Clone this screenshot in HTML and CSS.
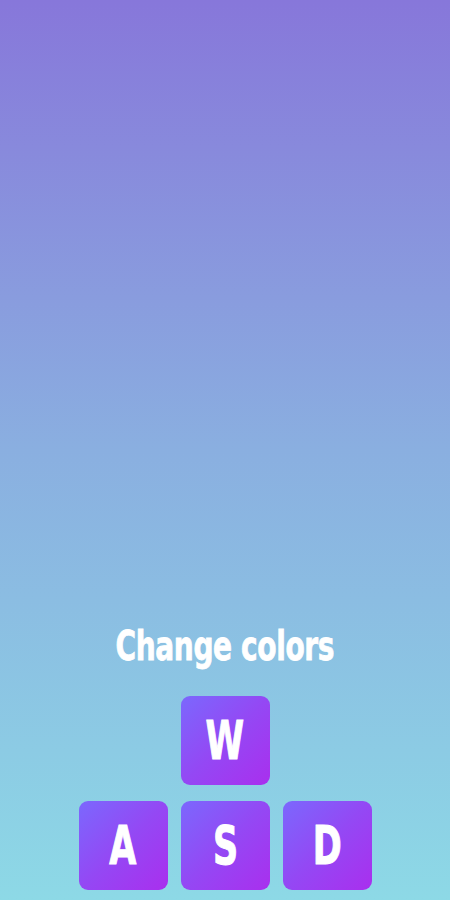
FILE: index.html
```html
<!DOCTYPE html>
<html lang="en">
<head>
<meta charset="utf-8">
<title>Change colors</title>
<link rel="stylesheet" href="styles.css">
</head>
<body>
<main class="screen">
  <h1 class="title"><span class="squeeze">Change colors</span></h1>
  <div class="keys">
    <div class="key key-w"><span class="squeeze">W</span></div>
    <div class="key key-a"><span class="squeeze">A</span></div>
    <div class="key key-s"><span class="squeeze">S</span></div>
    <div class="key key-d"><span class="squeeze">D</span></div>
  </div>
</main>
</body>
</html>
```

FILE: styles.css
```css
html, body {
  margin: 0;
  padding: 0;
  height: 100%;
}
body {
  background: linear-gradient(to bottom, #8777da 0%, #8aafe0 50%, #8dd9e6 100%);
  font-family: "DejaVu Sans Condensed", "DejaVu Sans", sans-serif;
}
.screen {
  height: 900px;
  box-sizing: border-box;
  display: flex;
  flex-direction: column;
  align-items: center;
  justify-content: flex-end;
  padding-bottom: 10px;
}
.squeeze {
  display: inline-block;
  transform: scaleX(0.76);
  -webkit-text-stroke: 0.8px #fff;
}
.title {
  margin: 0 0 26px;
  color: #fff;
  font-size: 41px;
  font-weight: 700;
  line-height: 48px;
  letter-spacing: -0.5px;
  white-space: nowrap;
}
.keys {
  display: grid;
  grid-template-columns: repeat(3, 89px);
  grid-template-rows: repeat(2, 89px);
  column-gap: 13px;
  row-gap: 16px;
}
.key {
  display: flex;
  align-items: center;
  justify-content: center;
  border-radius: 9px;
  background: linear-gradient(135deg, #7b68fd 0%, #9448f4 50%, #a92fee 100%);
  color: #fff;
  font-size: 54px;
  font-weight: 700;
  line-height: 1;
}
.key .squeeze {
  transform: scaleX(0.72);
  -webkit-text-stroke: 1px #fff;
}
.key-w { grid-column: 2; grid-row: 1; }
.key-a { grid-column: 1; grid-row: 2; }
.key-s { grid-column: 2; grid-row: 2; }
.key-d { grid-column: 3; grid-row: 2; }
```
